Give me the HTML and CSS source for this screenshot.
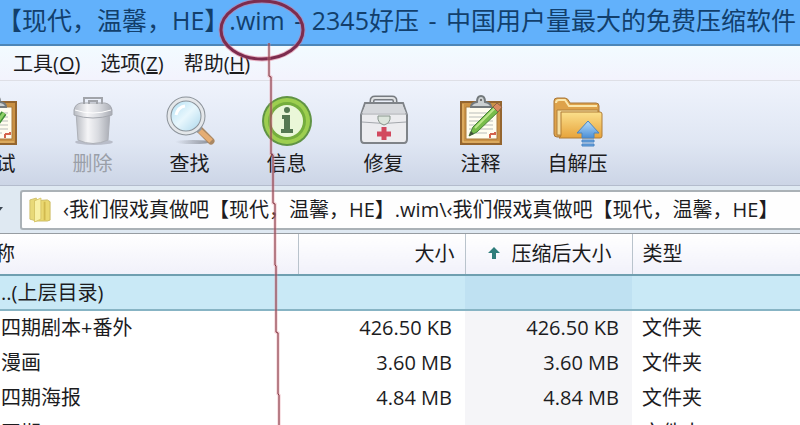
FILE: index.html
```html
<!DOCTYPE html>
<html lang="zh-CN">
<head>
<meta charset="utf-8" />
<title>2345好压</title>
<link rel="stylesheet" href="styles.css">
</head>

<body>
<div class="window">

<header class="titlebar">【现代，温馨，HE】.wim <span class="dash">-</span> 2345好压 <span class="dash">-</span> 中国用户量最大的免费压缩软件</header>

<nav class="menu">
<button type="button">工具(<u>O</u>)</button>
<button type="button">选项(<u>Z</u>)</button>
<button type="button">帮助(<u>H</u>)</button>
</nav>

<div class="toolbar">
<button type="button" class="tool">
<svg viewBox="0 0 52 52">
  <use href="#clipboard" />
  <path d="M16 27l6 8 12-17" fill="none" stroke="#3f8f35" stroke-width="6" />
  <path d="M16 27l6 8 12-17" fill="none" stroke="#8fd067" stroke-width="3" />
</svg>
<span>测试</span>
</button>

<button type="button" class="tool" disabled>
<svg viewBox="0 0 52 52">
  <defs>
    <linearGradient id="steel">
      <stop offset="0" stop-color="#b9bcc3" />
      <stop offset=".35" stop-color="#f5f5f7" />
      <stop offset=".65" stop-color="#d9dbe0" />
      <stop offset="1" stop-color="#a9acb4" />
    </linearGradient>
  </defs>
  <ellipse cx="27" cy="47" rx="19" ry="3" fill="#b9bdc9" />
  <path d="M9 17l2 28q15 7 30 0l2-28z" fill="url(#steel)" stroke="#aeb1b8" />
  <path d="M7 15q1-6 7-7h24q6 1 7 7v5q-19 6-38 0z" fill="url(#steel)" stroke="#a6a9b0" />
  <path d="M8 15q18 6 36 0" fill="none" stroke="#fff" />
  <path d="M17 9V3h18v6M22 9V6h8v3" fill="none" stroke="#a1a4aa" stroke-width="2" />
</svg>
<span>删除</span>
</button>

<button type="button" class="tool">
<svg viewBox="0 0 52 52">
  <defs>
    <linearGradient id="lens" x1="0" y1="0" x2="1" y2="1">
      <stop offset="0" stop-color="#aadcf2" />
      <stop offset=".5" stop-color="#e8f7fd" />
      <stop offset="1" stop-color="#a4d3ea" />
    </linearGradient>
    <linearGradient id="shade">
      <stop offset="0" stop-color="#8b8f99" stop-opacity="0" />
      <stop offset="1" stop-color="#8b8f99" />
    </linearGradient>
  </defs>
  <ellipse cx="29" cy="47" rx="18" ry="2" fill="url(#shade)" />
  <path d="M34 33l13 13" stroke="#a98763" stroke-width="7" stroke-linecap="round" />
  <path d="M33 33l14 13" stroke="#e5ad74" stroke-width="5" />
  <path d="M31 31l5 5" stroke="#9a9a9c" stroke-width="6" />
  <circle cx="22" cy="21" r="17" fill="url(#lens)" stroke="#8b9299" stroke-width="5" />
  <circle cx="22" cy="21" r="17" fill="none" stroke="#e4e7ea" stroke-width="3" />
  <path d="M12 20q2-8 9-9" fill="none" stroke="#fff" stroke-width="3" />
</svg>
<span>查找</span>
</button>

<button type="button" class="tool">
<svg viewBox="0 0 52 52">
  <circle cx="26" cy="26" r="25" fill="#609344" />
  <circle cx="26" cy="26" r="23" fill="#9dce4f" />
  <circle cx="26" cy="26" r="19" fill="#75ad3d" />
  <circle cx="26" cy="26" r="16" fill="#eaf7d8" />
  <circle cx="26" cy="15" r="3" fill="#557852" />
  <path d="M21 20h8v14h3v4H20v-4h3V24h-2z" fill="#557852" />
</svg>
<span>信息</span>
</button>

<button type="button" class="tool">
<svg viewBox="0 0 52 52">
  <path d="M14 11V6q0-3 3-3h17q3 0 3 3v5" fill="none" stroke="#777b80" stroke-width="5" />
  <path d="M14 11V6q0-3 3-3h17q3 0 3 3v5" fill="none" stroke="#dfe1e3" stroke-width="2" />
  <path d="M7 8h38l4 12v24q0 4-3 4H6q-3 0-3-4V20z" fill="#ececef" stroke="#7f8388" stroke-width="2" />
  <path d="M4 18L8 9h36l4 9z" fill="#d6d8dc" />
  <path d="M3 19h46M4 27q22 3 44 0" fill="none" stroke="#a4a7ac" />
  <path d="M20 21h12q1 7-6 9-7-2-6-9z" fill="#dce5dc" stroke="#87958b" />
  <path d="M26 32v13M19 39h14" stroke="#d2495e" stroke-width="5" />
</svg>
<span>修复</span>
</button>

<button type="button" class="tool">
<svg viewBox="0 0 52 52">
  <defs>
    <g id="clipboard">
      <path d="M6 7h40v42H6z" fill="#ca9144" stroke="#94652f" stroke-width="2" />
      <path d="M8 9v38h36" fill="none" stroke="#ecc278" />
      <path d="M11 12h31v32H11z" fill="#fffdf0" stroke="#a97a3f" />
      <path d="M14 18h24M14 22h24M14 26h24M14 30h24M14 34h24M14 38h18" stroke="#b9bdb9" />
      <path d="M35 39h5v-2M35 39v4" fill="none" stroke="#d4644d" stroke-width="2" />
      <path d="M16 12q0-4 6-5 0-6 4-6t4 6q6 1 6 5z" fill="#cbd0d2" stroke="#73797c" stroke-width="2" />
      <circle cx="26" cy="5" r="1" fill="#555" />
    </g>
  </defs>
  <use href="#clipboard" />
  <path d="M14 41l4-9 22-22 5 5-23 22z" fill="#78bd4b" stroke="#478239" />
  <path d="M20 33l20-20" stroke="#bce68b" stroke-width="2" />
  <path d="M38 12l4-4 5 4-4 5z" fill="#d88a60" stroke="#8e6343" />
  <path d="M14 41l2-5 3 3z" fill="#43543c" />
</svg>
<span>注释</span>
</button>

<button type="button" class="tool">
<svg viewBox="0 0 52 52">
  <defs>
    <linearGradient id="folder" x1="0" y1="0" x2="0" y2="1">
      <stop offset="0" stop-color="#fbe08c" />
      <stop offset="1" stop-color="#e7a33b" />
    </linearGradient>
    <linearGradient id="arrow" x1="0" y1="0" x2="0" y2="1">
      <stop offset="0" stop-color="#b5dcfb" />
      <stop offset="1" stop-color="#4b8fd6" />
    </linearGradient>
  </defs>
  <path d="M2 39V6q0-3 3-3h8q3 0 5 5h26q3 0 3 3v28q0 3-3 3H5q-3 0-3-3z" fill="#dea24a" stroke="#a7773a" />
  <path d="M4 8q0-3 3-3h6l4 6h28" fill="none" stroke="#fbe7ac" stroke-width="2" />
  <path d="M5 40V15h41v26z" fill="#f6dfa0" stroke="#b2813c" />
  <path d="M9 17h39q2 0 2 2v22q0 2-2 2H7q2-1 2-3z" fill="url(#folder)" stroke="#b07c36" />
  <path d="M36 26l11 12h-5v5H30v-5h-5z" fill="url(#arrow)" stroke="#4d85bf" />
  <path d="M30 45h12v2H30zM30 49h12v2H30z" fill="#68a5e4" stroke="#4a84c0" />
</svg>
<span>自解压</span>
</button>
</div>

<div class="address">
<svg class="caret" viewBox="0 0 8 8"><path d="M0 1h7L3 6z" fill="#3b4652" /></svg>
<label class="path">
<svg viewBox="0 0 24 28">
  <path d="M1 3l7-2v25l-7-2z" fill="#e8d978" stroke="#cfc069" />
  <path d="M6 4l14-1 3 2v20l-3 1H6z" fill="#ead870" stroke="#c9b85c" />
  <path d="M6 4l7-3v23l-7 3z" fill="#f8f0a5" stroke="#d6c566" />
  <path d="M17 5v20" stroke="#d1b94f" stroke-width="2" />
</svg>
<input type="text" aria-label="路径" value="‹我们假戏真做吧【现代，温馨，HE】.wim\‹我们假戏真做吧【现代，温馨，HE】" />
</label>
</div>

<table class="files">
<colgroup>
<col class="col-name" />
<col class="col-size" />
<col class="col-packed" />
<col />
</colgroup>
<thead>
<tr>
<th class="name">名称</th>
<th class="num">大小</th>
<th class="num packed"><svg class="sort" viewBox="0 0 12 12"><path d="M6 0l6 6H8v6H4V6H0z" fill="#2f7d7b" /></svg>压缩后大小</th>
<th>类型</th>
</tr>
</thead>
<tbody>
<tr class="selected">
<td>..(上层目录)</td>
<td class="num"></td>
<td class="num"></td>
<td></td>
</tr>
<tr>
<td>四期剧本+番外</td>
<td class="num">426.50 KB</td>
<td class="num">426.50 KB</td>
<td>文件夹</td>
</tr>
<tr>
<td>漫画</td>
<td class="num">3.60 MB</td>
<td class="num">3.60 MB</td>
<td>文件夹</td>
</tr>
<tr>
<td>四期海报</td>
<td class="num">4.84 MB</td>
<td class="num">4.84 MB</td>
<td>文件夹</td>
</tr>
<tr>
<td>四期</td>
<td class="num"></td>
<td class="num"></td>
<td>文件夹</td>
</tr>
</tbody>
</table>

<!-- hand-drawn mark over the file extension -->
<svg class="mark" width="320" height="425" viewBox="0 0 320 425">
  <ellipse cx="262" cy="30" rx="41" ry="29" fill="none" stroke="#e0708c" stroke-opacity=".5" stroke-width="5" />
  <ellipse cx="262" cy="30" rx="41" ry="29" fill="none" stroke="#7c2c4e" stroke-width="3" />
  <path d="M269 43v33l2 1v77l2 1v48l2 1v61l1 1v66l2 1v61l1 1v31" fill="none" stroke="#e58c98" stroke-opacity=".5" stroke-width="3" />
  <path d="M269 43v33l2 1v77l2 1v48l2 1v61l1 1v66l2 1v61l1 1v31" fill="none" stroke="#7c3440" stroke-width="1" />
</svg>

</div>
</body>
</html>
```

FILE: styles.css
```css
* {
  box-sizing: border-box;
}

body {
  margin: 0;
  font-family: "Open Sans", "Noto Sans CJK SC", sans-serif;
  font-size: 20px;
  line-height: 28px;
  color: #1c1c1e;
}

button, input {
  font: inherit;
  color: inherit;
  border: 0;
  padding: 0;
  background: none;
}

.window {
  position: relative;
  height: 100vh;
  overflow: hidden;
  background: #fff;
}

.titlebar {
  height: 46px;
  padding-bottom: 4px;
  border-bottom: 2px solid #4c86b8;
  background: #62b1fb;
  color: #123f6c;
  font-size: 25px;
  line-height: 40px;
  text-indent: -3px;
  white-space: nowrap;
}

.dash {
  margin: 0 3px;
}

.menu {
  display: flex;
  gap: 20px;
  height: 35px;
  padding: 4px 13px;
  border-bottom: 1px solid #dedfe6;
  background: linear-gradient(#f2fbff, #f3f3fd);
}

.toolbar {
  display: flex;
  height: 105px;
  padding-top: 14px;
  border-bottom: 1px solid #b4bccd;
  background: linear-gradient(#eff3fc, #dfe6f3 60%, #ccd5e6);
}

.tool {
  flex: none;
  display: flex;
  flex-direction: column;
  align-items: center;
  gap: 3px;
  width: 97px;
}

/* scrolled partly out of view */
.tool:first-child {
  margin-left: -53px;
}

.tool svg {
  width: 52px;
  height: 52px;
}

.tool:disabled {
  color: #9a9fa8;
}

.address {
  display: flex;
  align-items: center;
  height: 48px;
  padding: 4px 0;
  border-bottom: 1px solid #979da2;
  background: #dfe9f2;
}

.caret {
  width: 8px;
  height: 8px;
  margin-right: 12px;
  margin-left: -4px;
}

.path {
  flex: 1;
  display: flex;
  align-items: center;
  gap: 12px;
  height: 40px;
  padding-left: 7px;
  margin-left: 4px;
  border: 2px solid #aab1b6;
  border-right: 0;
  border-radius: 3px 0 0 3px;
  background: #fefefe;
}

.path svg {
  width: 22px;
  height: 28px;
}

.path input {
  flex: 1;
  min-width: 0;
  outline: 0;
}

.files {
  width: 100%;
  table-layout: fixed;
  border-collapse: collapse;
}

.col-name {
  width: 298px;
}

.col-size, .col-packed {
  width: 167px;
}

.col-packed {
  background: #f5f5f8;
}

.files th {
  height: 41px;
  padding: 0 10px;
  border-right: 1px solid #b9c3cc;
  border-bottom: 2px solid #6f9fb0;
  background: linear-gradient(#fff, #f1f1fa);
  font-weight: normal;
  text-align: left;
  white-space: nowrap;
}

.files th:last-child {
  border-right: 0;
}

.files td {
  height: 35px;
  padding: 0 10px;
  white-space: nowrap;
}

.files td:first-child {
  padding-left: 1px;
}

.files th.name {
  padding-left: 0;
  text-indent: -25px;
}

.files .num {
  text-align: right;
}

.files th.packed {
  padding-right: 20px;
}

.files td.num {
  padding-right: 13px;
}

.files .selected td {
  border-bottom: 2px solid #87b4c4;
  background: #c9e9f6;
}

.files .selected td:nth-child(3) {
  background: #bfe1f2;
}

.sort {
  width: 12px;
  height: 12px;
  margin-right: 12px;
  vertical-align: 2px;
}

.mark {
  position: absolute;
  top: 0;
  left: 0;
  pointer-events: none;
}
```
